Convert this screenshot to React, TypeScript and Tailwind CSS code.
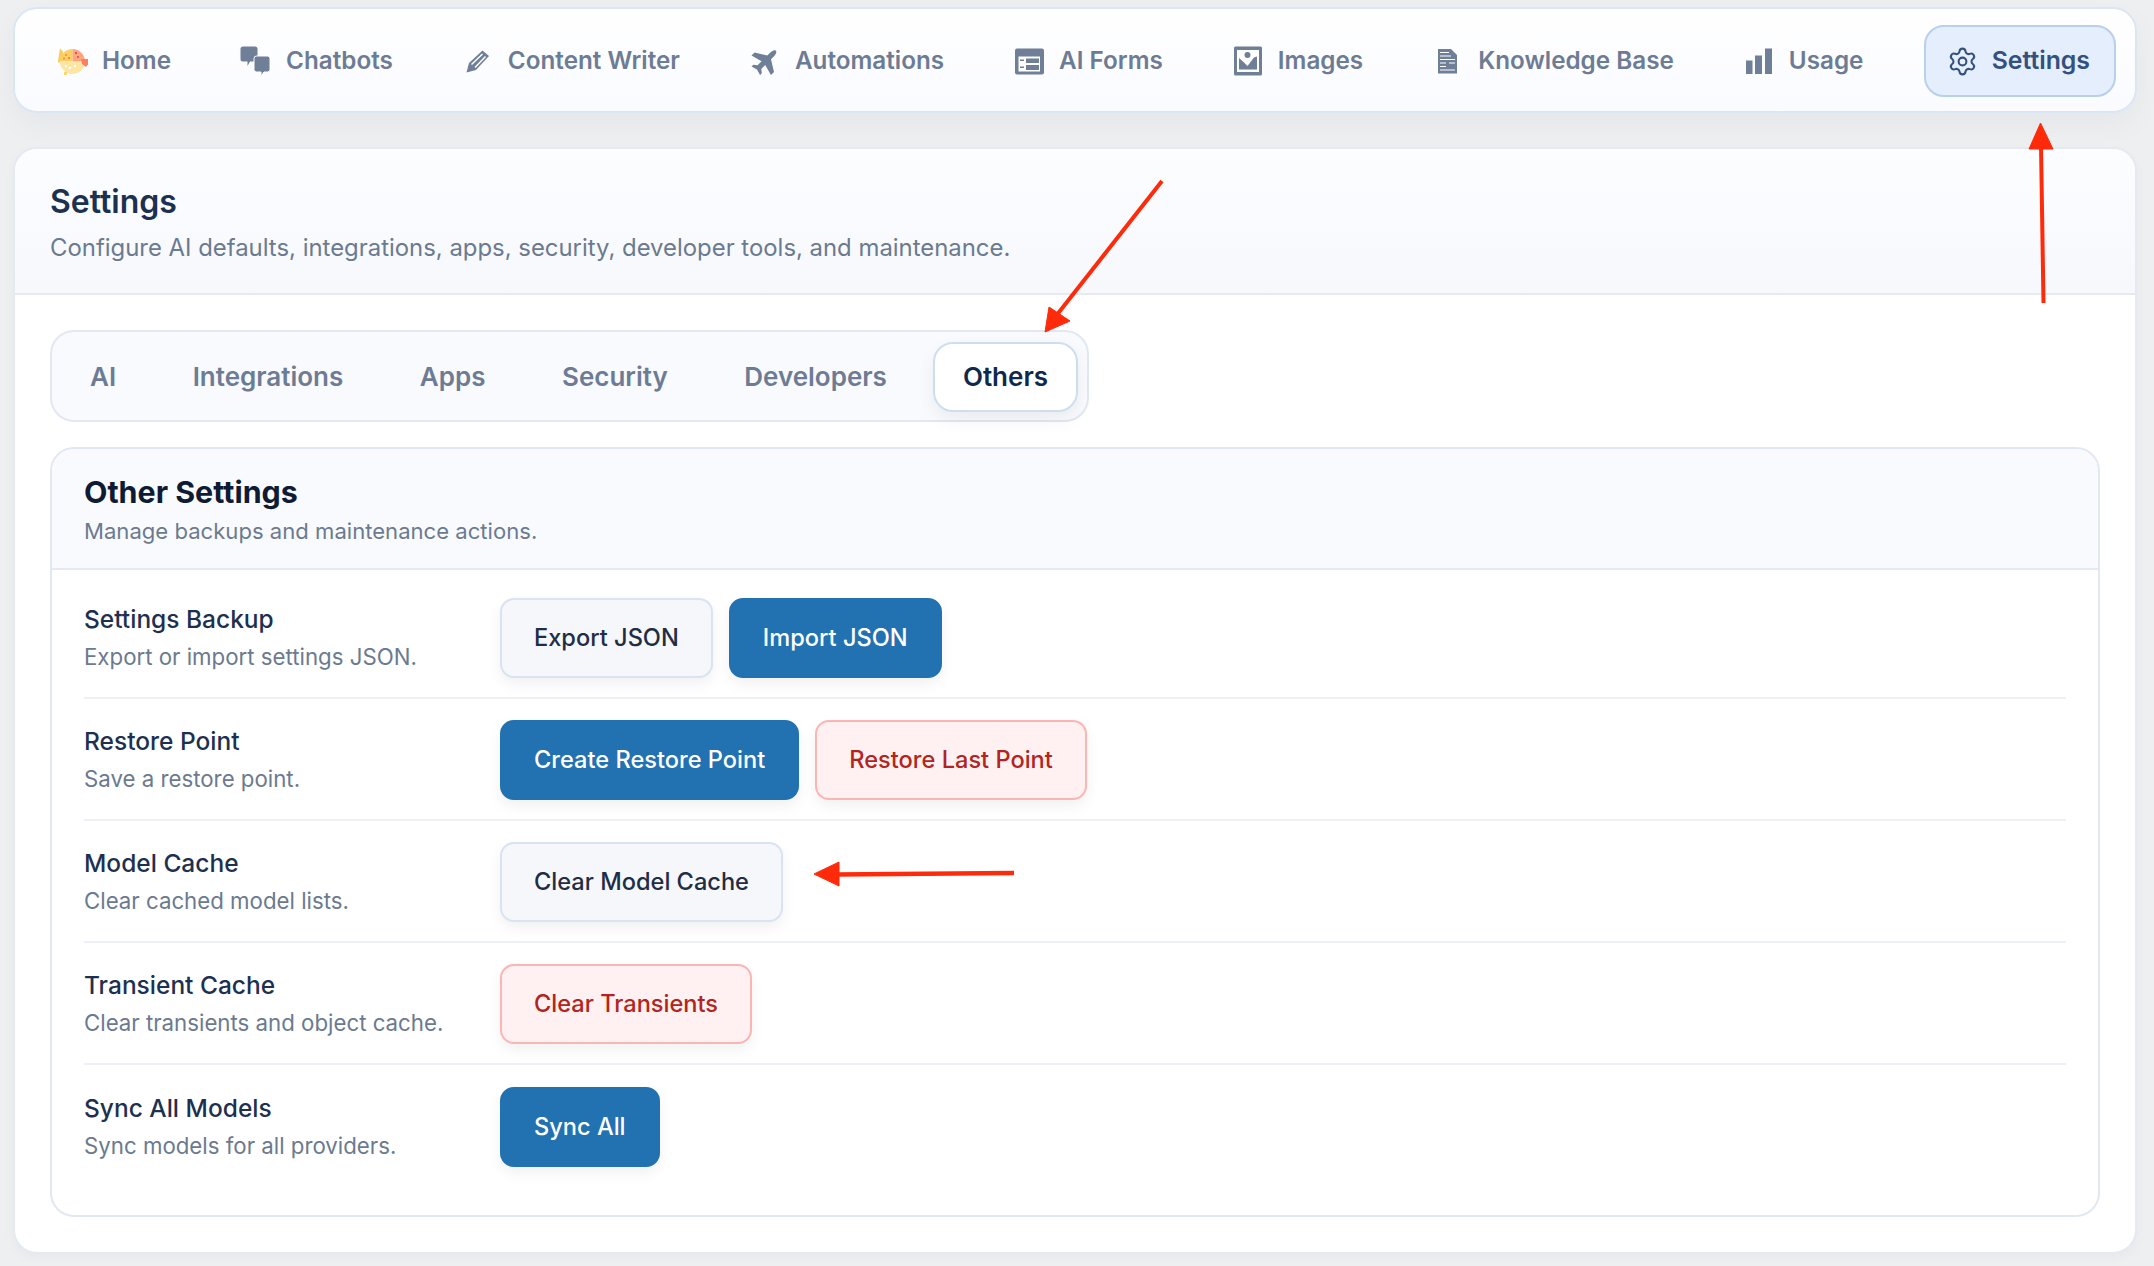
import React from 'react';
import { Settings } from 'lucide-react';

const FishIcon = () => (
  <svg viewBox="0 0 33 33" className="h-[33px] w-[33px] shrink-0">
    <path d="M5 3.5 L8 6.5 L8 16.5 L3 16.5 Z" fill="#fbcb5c" />
    <path d="M5 16.5 A12.5 12.5 0 0 1 17.5 4 L17.5 16.5 Z" fill="#fbcf62" />
    <path d="M17.5 4 A12.5 12.5 0 0 1 30 16.5 L17.5 16.5 Z" fill="#ffa67c" />
    <path d="M5 16.5 H30 A12.5 12.5 0 0 1 5 16.5 Z" fill="#fde6a4" />
    <path d="M26 14 H34 V18 L31 22 L27 19 Z" fill="#ff7d63" />
    <rect x="3" y="14.5" width="2" height="3" fill="#fbcf62" />
    <rect x="10" y="9" width="2" height="2" fill="#ef9a4c" />
    <rect x="13" y="12" width="2" height="2" fill="#ef8a4c" />
    <rect x="8" y="12.5" width="2" height="2" fill="#ef9a4c" />
    <rect x="20" y="7" width="2" height="2" fill="#d8545a" />
    <rect x="22" y="11" width="2" height="2" fill="#e0605a" />
    <rect x="10" y="20" width="2" height="2" fill="#ffffff" />
    <rect x="14" y="22" width="2" height="2" fill="#ffffff" />
    <rect x="19" y="20" width="2" height="2" fill="#ffffff" />
    <rect x="9" y="27" width="3" height="3" fill="#fbd772" />
  </svg>
);

const ChatIcon = () => (
  <svg viewBox="0 0 33 33" className="h-[33px] w-[33px] shrink-0" fill="#6f7f98">
    <path d="M4 1.5 H16 A2.5 2.5 0 0 1 18.5 4 V14 A2.5 2.5 0 0 1 16 16.5 H11 L8.5 21 V16.5 H4 A2.5 2.5 0 0 1 1.5 14 V4 A2.5 2.5 0 0 1 4 1.5 Z" />
    <path d="M17.5 11 H28.5 A2.5 2.5 0 0 1 31 13.5 V24.5 A2.5 2.5 0 0 1 28.5 27 H25 L22 31 V27 H17.5 A2.5 2.5 0 0 1 15 24.5 V13.5 A2.5 2.5 0 0 1 17.5 11 Z" stroke="#ffffff" strokeWidth="1" />
  </svg>
);

const PencilIcon = () => (
  <svg viewBox="0 0 33 33" className="h-[33px] w-[33px] shrink-0">
    <path d="M5.5 27.5 L8 18 L21.5 5.5 L28 11 L15 25 Z" fill="#6f7f98" />
    <path d="M10.5 19.5 L21.5 9 M14 22.5 L24.5 11.5" stroke="#ffffff" strokeWidth="1.5" />
  </svg>
);

const PlaneIcon = () => (
  <svg viewBox="0 0 33 33" className="h-[33px] w-[33px] shrink-0" fill="#6f7f98">
    <path
      d="M16 -1 C18 -1 19 2 19 5 L19 10 L32 18 L32 23 L19 19.5 L19 26 L23 29 L23 32 L16 30 L9 32 L9 29 L13 26 L13 19.5 L0 23 L0 18 L13 10 L13 5 C13 2 14 -1 16 -1 Z"
      transform="translate(17.5 16) rotate(45) scale(0.86) translate(-16 -16)"
    />
  </svg>
);

const FormIcon = () => (
  <svg viewBox="0 0 33 33" className="h-[33px] w-[33px] shrink-0">
    <rect x="3" y="3.5" width="29" height="26" rx="2" fill="#6f7f98" />
    <rect x="6.5" y="11.5" width="21.5" height="15" fill="#ffffff" />
    <rect x="14" y="13.5" width="13" height="4.5" fill="#6f7f98" />
    <rect x="14" y="20" width="13" height="5" fill="#6f7f98" />
    <rect x="8" y="14.5" width="4" height="1.5" fill="#6f7f98" />
    <rect x="8" y="21.5" width="4" height="1.5" fill="#6f7f98" />
  </svg>
);

const ImageIcon = () => (
  <svg viewBox="0 0 33 33" className="h-[33px] w-[33px] shrink-0">
    <rect x="3" y="1.5" width="28" height="29" rx="1.5" fill="#6f7f98" />
    <rect x="6" y="5" width="22" height="22" fill="#ffffff" />
    <circle cx="16.5" cy="10" r="3" fill="#6f7f98" />
    <path d="M8 24.5 V13 L12.5 17 L16.5 21 L23 12.5 L26 11.5 V24.5 Z" fill="#6f7f98" />
  </svg>
);

const DocIcon = () => (
  <svg viewBox="0 0 33 33" className="h-[33px] w-[33px] shrink-0">
    <path d="M7 4 H20 L26 10 V28.5 H7 Z" fill="#6f7f98" />
    <path d="M9 7.5 H18 M9 11 H20 M9 14.5 H24 M9 18 H15 M18 18 H24 M9 21.5 H15 M9 25 H24" stroke="#ffffff" strokeWidth="1.2" />
  </svg>
);

const BarsIcon = () => (
  <svg viewBox="0 0 33 33" className="h-[33px] w-[33px] shrink-0" fill="#6f7f98">
    <rect x="4" y="15.5" width="6.5" height="13.5" />
    <rect x="13" y="10.5" width="7" height="18.5" />
    <rect x="23" y="3.5" width="7" height="25.5" />
  </svg>
);

const navItems = [
  { label: 'Home', icon: <FishIcon /> },
  { label: 'Chatbots', icon: <ChatIcon /> },
  { label: 'Content Writer', icon: <PencilIcon /> },
  { label: 'Automations', icon: <PlaneIcon /> },
  { label: 'AI Forms', icon: <FormIcon /> },
  { label: 'Images', icon: <ImageIcon /> },
  { label: 'Knowledge Base', icon: <DocIcon /> },
  { label: 'Usage', icon: <BarsIcon /> },
];

const tabs = ['AI', 'Integrations', 'Apps', 'Security', 'Developers'];

type Variant = 'default' | 'primary' | 'danger';

const buttonStyles: Record<Variant, string> = {
  default: 'border-[#d9e3f1] bg-[#f6f7fb] text-[#1f2d45]',
  primary: 'border-[#2271b1] bg-[#2271b1] text-white',
  danger: 'border-[#fcb5b5] bg-[#fff1f1] text-[#b32420]',
};

const rows: { title: string; desc: string; actions: { label: string; variant: Variant }[] }[] = [
  {
    title: 'Settings Backup',
    desc: 'Export or import settings JSON.',
    actions: [
      { label: 'Export JSON', variant: 'default' },
      { label: 'Import JSON', variant: 'primary' },
    ],
  },
  {
    title: 'Restore Point',
    desc: 'Save a restore point.',
    actions: [
      { label: 'Create Restore Point', variant: 'primary' },
      { label: 'Restore Last Point', variant: 'danger' },
    ],
  },
  {
    title: 'Model Cache',
    desc: 'Clear cached model lists.',
    actions: [{ label: 'Clear Model Cache', variant: 'default' }],
  },
  {
    title: 'Transient Cache',
    desc: 'Clear transients and object cache.',
    actions: [{ label: 'Clear Transients', variant: 'danger' }],
  },
  {
    title: 'Sync All Models',
    desc: 'Sync models for all providers.',
    actions: [{ label: 'Sync All', variant: 'primary' }],
  },
];

export default function App() {
  return (
    <div className="relative h-[1266px] overflow-hidden bg-[#eeeff1] pl-[13px] pr-[17px] pt-[7px] font-['Inter',sans-serif]">
      {/* Top nav */}
      <nav className="flex h-[106px] items-center gap-[20px] rounded-[24px] border-2 border-[#dbe6f3] bg-gradient-to-b from-white to-[#fafbff] pl-[16px] pr-[19px] pt-[2px] shadow-[0_12px_30px_rgba(15,23,42,0.04)]">
        {navItems.map((item) => (
          <a key={item.label} className="flex items-center gap-[14px] px-[24px] text-[24.25px] font-semibold text-[#6d7c94]">
            {item.icon}
            {item.label}
          </a>
        ))}
        <a className="ml-auto flex h-[72px] items-center gap-[13px] rounded-[20px] border-2 border-[#b9d0ea] bg-[#e4eefc] pl-[20px] pr-[24px] text-[24.8px] font-semibold text-[#34507c]">
          <span className="flex h-[33px] w-[33px] shrink-0 items-center justify-center">
            <Settings size={31} strokeWidth={1.6} />
          </span>
          Settings
        </a>
      </nav>

      {/* Page card */}
      <main className="mt-[34px] h-[1107px] rounded-[24px] border-2 border-[#e4e9f2] bg-white shadow-[0_4px_12px_rgba(15,23,42,0.03)]">
        <header className="h-[146px] rounded-t-[22px] border-b-2 border-[#e4e9f2] bg-gradient-to-b from-[#fcfdff] to-[#f6f8fc] px-[35px] pt-[33px]">
          <h1 className="text-[32px] font-semibold leading-[40px] text-[#1c3050]">Settings</h1>
          <p className="mt-[11px] text-[23.9px] leading-[30px] text-[#6b7a8f]">
            Configure AI defaults, integrations, apps, security, developer tools, and maintenance.
          </p>
        </header>

        <div className="px-[35px] pt-[35px]">
          {/* Tabs */}
          <div className="flex h-[92px] w-fit items-center gap-[20.5px] rounded-[24px] border-2 border-[#e2e8f1] bg-[#f8fafd] pl-[10px] pr-[9px] pt-[1px]">
            {tabs.map((tab) => (
              <span key={tab} className="px-[28px] text-[26px] font-semibold text-[#6d7c94]">
                {tab}
              </span>
            ))}
            <span className="-ml-[2.5px] flex h-[70px] items-center rounded-[20px] border-2 border-[#cfdeef] bg-white px-[28px] text-[26px] font-semibold text-[#10294a] shadow-[0_8px_18px_rgba(15,23,42,0.06)]">
              Others
            </span>
          </div>

          {/* Other settings */}
          <section className="mt-[25px] h-[770px] rounded-[24px] border-2 border-[#e2e8f1]">
            <div className="h-[121px] rounded-t-[22px] border-b-2 border-[#e4e9f2] bg-[#f9fafe] px-[32px] pt-[24px]">
              <h2 className="text-[30.4px] font-bold leading-[38px] text-[#0f1b33]">Other Settings</h2>
              <p className="mt-[6px] text-[22.1px] leading-[28px] text-[#6b7a8f]">Manage backups and maintenance actions.</p>
            </div>

            <div className="mx-[32px] divide-y-2 divide-[#edf1f7] pt-[7px]">
              {rows.map((row) => (
                <div key={row.title} className="flex h-[122px] items-center pt-[2px]">
                  <div className="w-[416px] shrink-0 pb-[1px]">
                    <div className="text-[24.5px] font-medium leading-[30px] text-[#1e3050]">{row.title}</div>
                    <div className="mt-[8px] text-[22.25px] leading-[30px] text-[#6b7a8f]">{row.desc}</div>
                  </div>
                  <div className="flex gap-[16px]">
                    {row.actions.map((action) => (
                      <button
                        key={action.label}
                        className={`h-[80px] rounded-[14px] border-2 px-[32px] text-[23.6px] font-[450] shadow-[0_6px_14px_rgba(15,23,42,0.06)] ${buttonStyles[action.variant]}`}
                      >
                        {action.label}
                      </button>
                    ))}
                  </div>
                </div>
              ))}
            </div>
          </section>
        </div>
      </main>

      {/* Annotation arrows */}
      <svg className="pointer-events-none absolute left-0 top-0 h-[1266px] w-[2154px]" viewBox="0 0 2154 1266">
        <g fill="#ff2a0a" stroke="#ff2a0a">
          <path d="M2043.5 303 L2041 145" strokeWidth="4" />
          <path d="M2040.5 123 L2053 149 L2029 149 Z" strokeWidth="1" />
          <path d="M1162 181 L1056 316" strokeWidth="4" />
          <path d="M1045 332 L1049 307 L1070 321 Z" strokeWidth="1" />
          <path d="M1014 873 L836 874.5" strokeWidth="4.5" />
          <path d="M814 874 L839 862 L839 886 Z" strokeWidth="1" />
        </g>
      </svg>
    </div>
  );
}
